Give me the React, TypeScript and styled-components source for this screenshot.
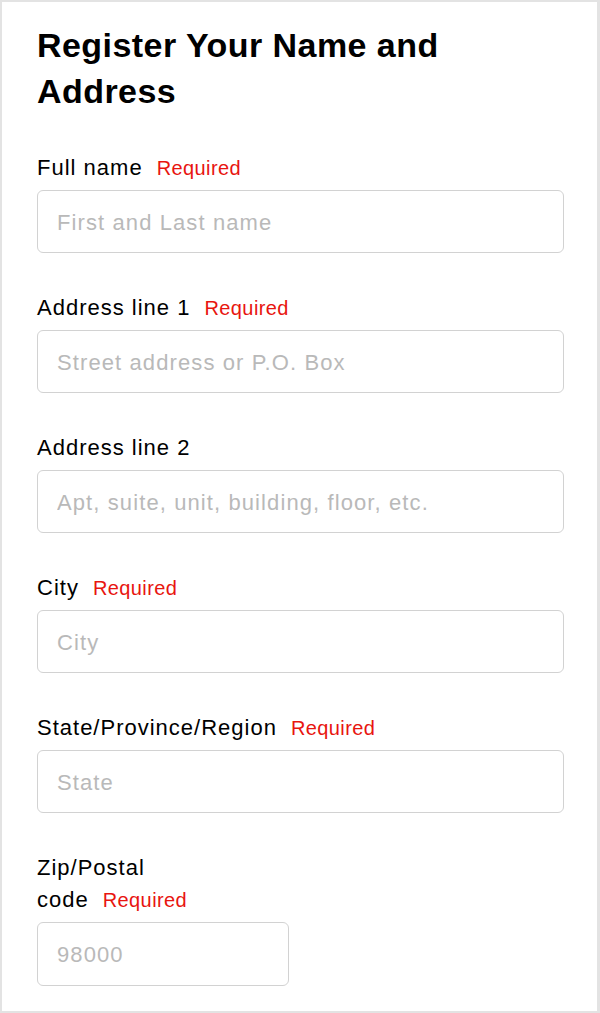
import React from "react";
import styled, { createGlobalStyle } from "styled-components";

const GlobalStyle = createGlobalStyle`
  html, body { margin: 0; padding: 0; background: #ffffff; }
  body { font-family: "Liberation Sans", Arial, sans-serif; color: #111; }
  * { box-sizing: border-box; }
`;

const Page = styled.div`
  width: 600px;
  height: 1013px;
  border: 2px solid #e3e3e3;
  border-right-width: 3px;
  padding: 20px 33px 0 35px;
  overflow: hidden;
`;

const Title = styled.h1`
  margin: 0 0 38px;
  font-size: 34px;
  line-height: 46px;
  font-weight: 700;
  color: #000;
  letter-spacing: 0.45px;
`;

const Form = styled.form`
  display: flex;
  flex-direction: column;
  gap: 39px;
`;

const Field = styled.div<{ $width?: number }>`
  display: flex;
  flex-direction: column;
  gap: 6px;
  width: ${(p) => (p.$width ? `${p.$width}px` : "100%")};
`;

const Label = styled.label`
  display: block;
  font-size: 22px;
  line-height: 32px;
  letter-spacing: 1px;
  color: #000;
`;

const Required = styled.span`
  color: #e8150f;
  font-size: 20px;
  letter-spacing: 0.4px;
  margin-left: 14px;
`;

const Input = styled.input<{ $tall?: boolean }>`
  width: 100%;
  height: ${(p) => (p.$tall ? "64px" : "63px")};
  border: 1.5px solid #d2d2d2;
  border-radius: 6px;
  padding: 2px 18px 0 19px;
  font-family: "Liberation Sans", Arial, sans-serif;
  font-size: 22px;
  letter-spacing: 1.1px;
  color: #111;
  outline: none;
  background: #fff;
  &::placeholder {
    color: #b9b9b9;
  }
`;

const fields: { label: string; placeholder: string; required: boolean; width?: number }[] = [
  { label: "Full name", placeholder: "First and Last name", required: true },
  { label: "Address line 1", placeholder: "Street address or P.O. Box", required: true },
  { label: "Address line 2", placeholder: "Apt, suite, unit, building, floor, etc.", required: false },
  { label: "City", placeholder: "City", required: true },
  { label: "State/Province/Region", placeholder: "State", required: true },
  { label: "Zip/Postal code", placeholder: "98000", required: true, width: 252 },
];

export default function App() {
  return (
    <>
      <GlobalStyle />
      <Page>
        <Title>Register Your Name and Address</Title>
        <Form>
          {fields.map((f, i) => (
            <Field key={i} $width={f.width}>
              <Label htmlFor={`f${i}`}>
                {f.label.split(" ").map((w, j) => (
                  <React.Fragment key={j}>
                    {j > 0 && " "}
                    {w}
                  </React.Fragment>
                ))}
                {f.required && <Required>Required</Required>}
              </Label>
              <Input id={`f${i}`} placeholder={f.placeholder} $tall={!!f.width} />
            </Field>
          ))}
        </Form>
      </Page>
    </>
  );
}
